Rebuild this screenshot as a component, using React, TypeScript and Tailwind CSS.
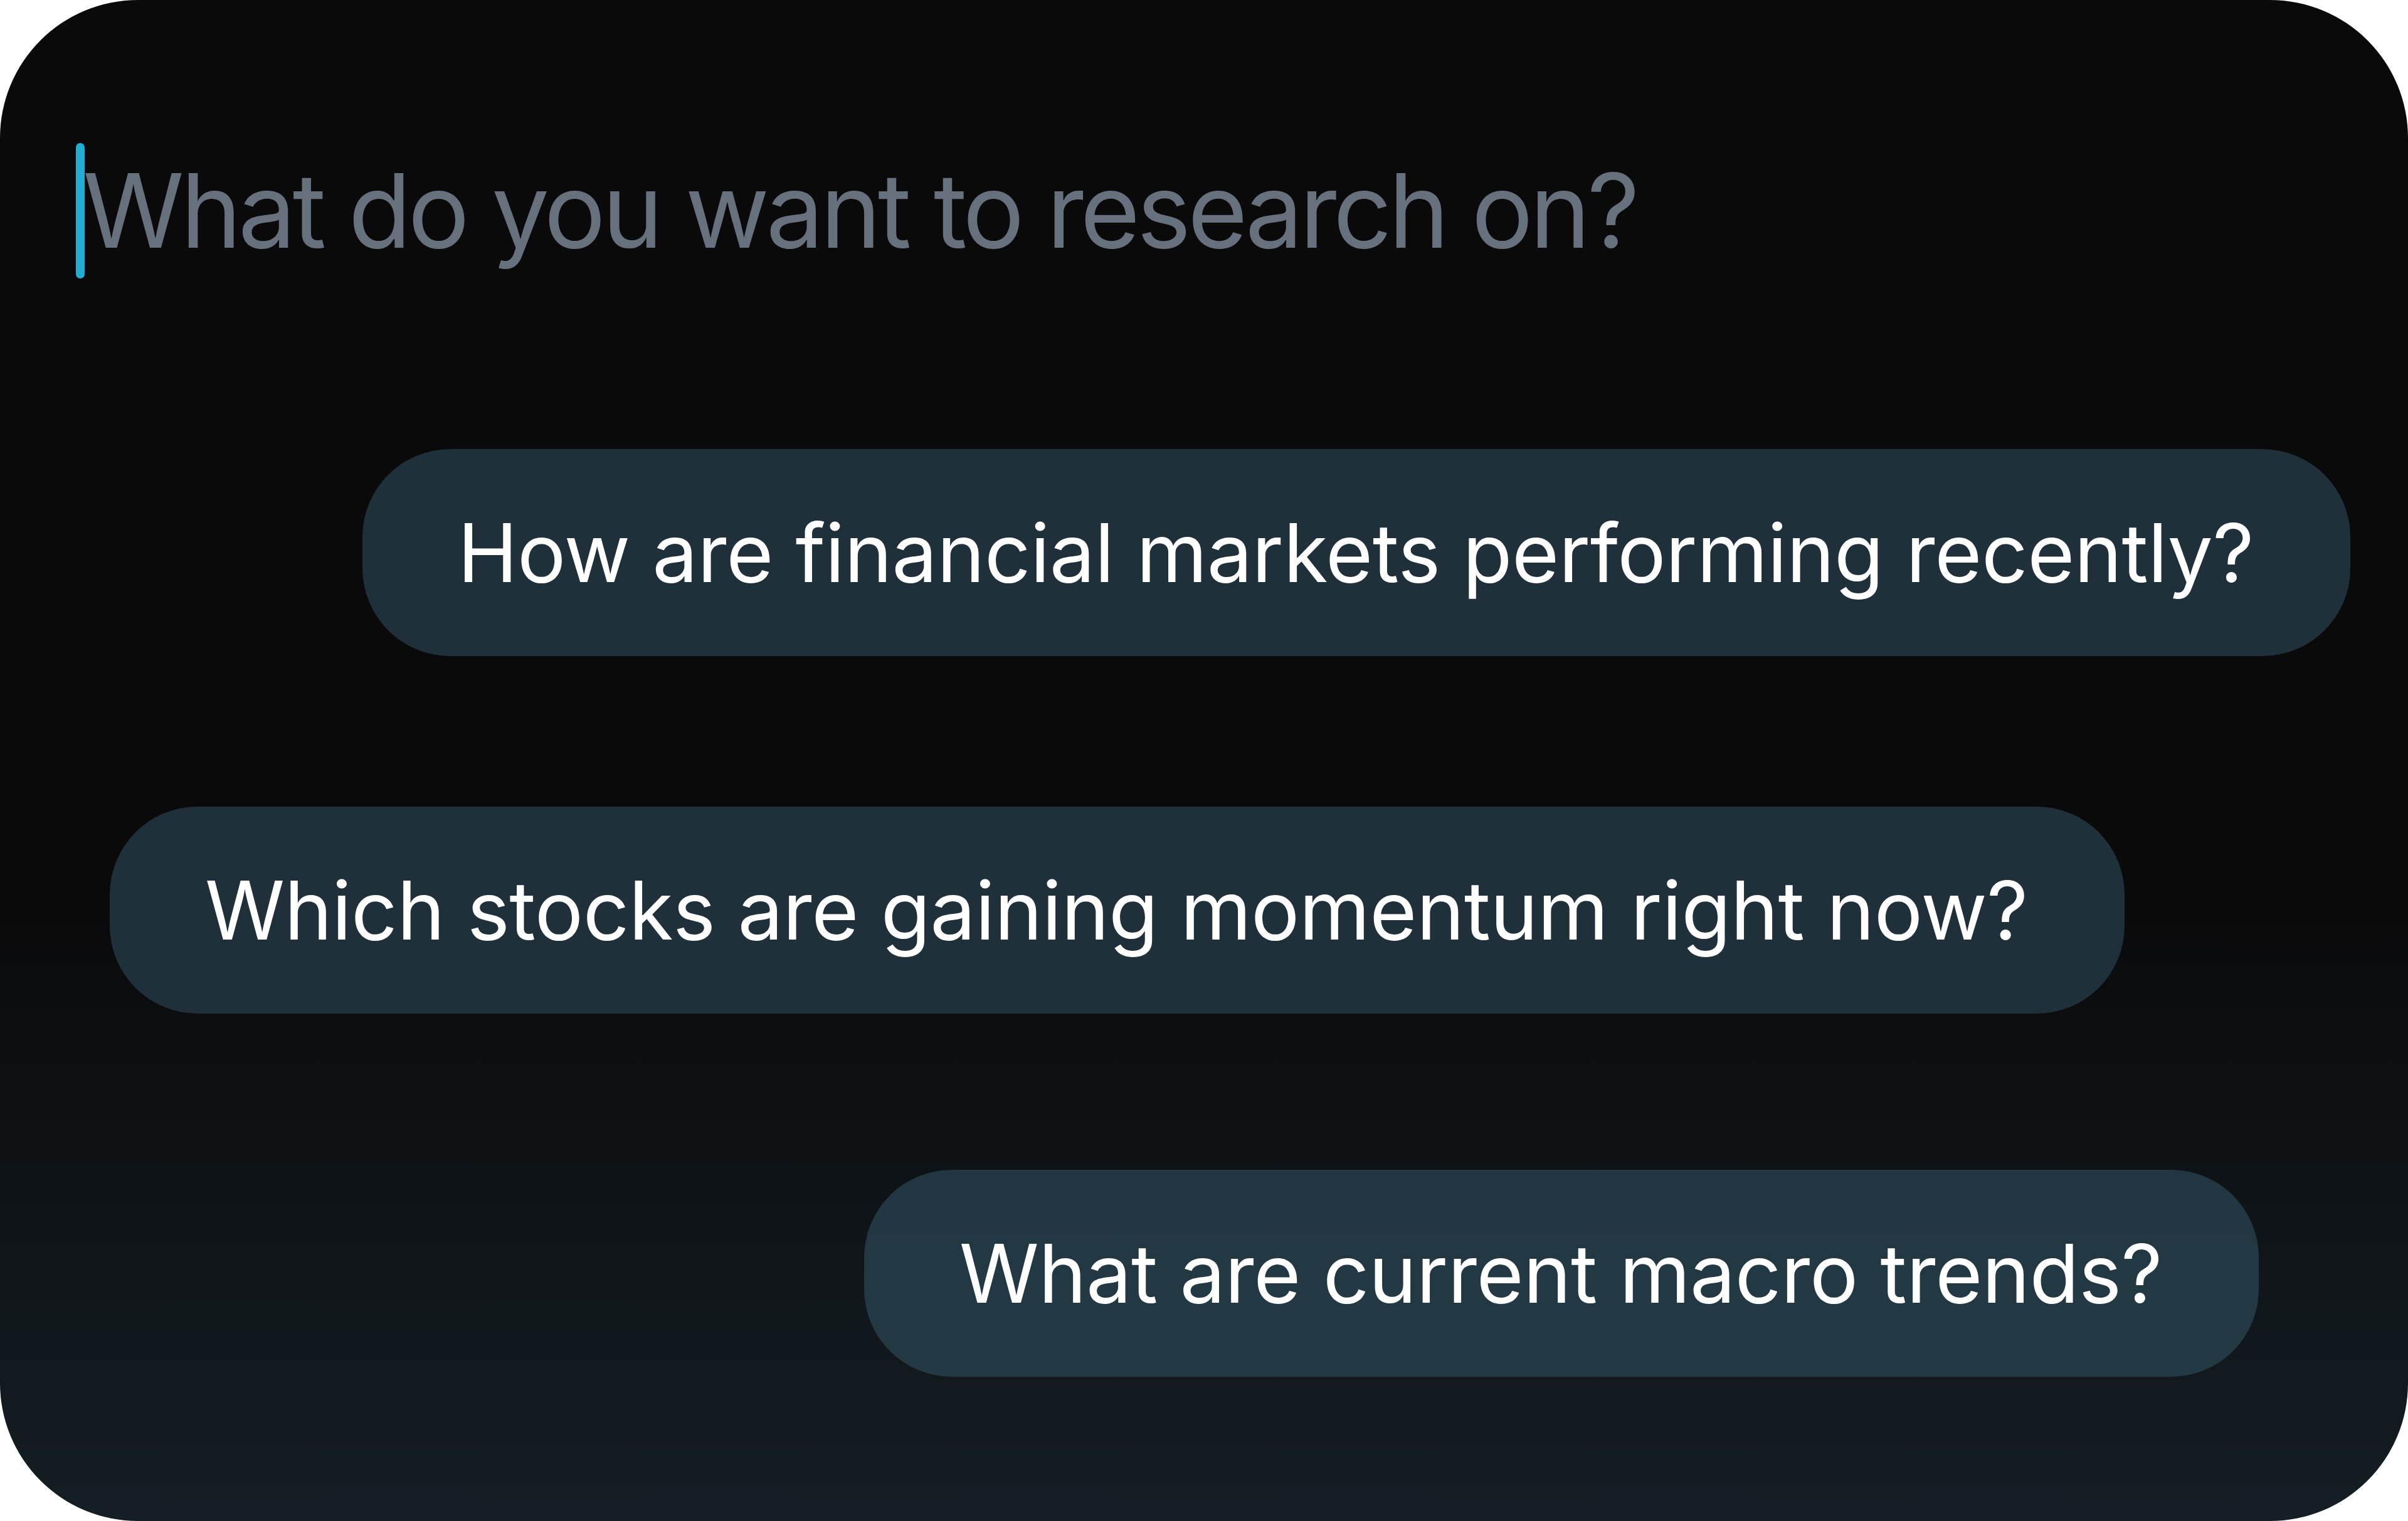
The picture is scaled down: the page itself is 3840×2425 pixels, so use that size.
const prompts = [
  { text: "How are financial markets performing recently?", place: "self-end mr-[92px]", tone: "bg-[#1f303a]" },
  { text: "Which stocks are gaining momentum right now?", place: "self-start ml-[175px] mt-[240px]", tone: "bg-[#1f303a]" },
  {
    text: "What are current macro trends?",
    place: "self-end mr-[238px] mt-[249px]",
    tone: "bg-[linear-gradient(180deg,#213641_0%,#233a45_100%)]",
  },
];

export default function App() {
  return (
    <div className="h-[2425px] w-[3840px] bg-white font-['Inter',_'Noto_Sans',_sans-serif]">
      <div className="flex h-full w-full flex-col rounded-[220px] bg-[linear-gradient(180deg,#0a0a0b_0%,#0a0a0b_60%,#141e24_100%)] pt-[228px]">
        <div className="flex items-center pl-[121px]">
          <span className="h-[216px] w-[14px] shrink-0 rounded-full bg-[#22aed4]" />
          <span className="-ml-[3px] text-[164px] leading-none tracking-[-0.033em] text-[#67707d]">
            What do you want to research on?
          </span>
        </div>

        <div className="mt-[272px] flex flex-col">
          {prompts.map((p) => (
            <PromptBubble key={p.text} text={p.text} className={`${p.place} ${p.tone}`} />
          ))}
        </div>
      </div>
    </div>
  );
}

function PromptBubble(props: { text: string; className: string }) {
  return (
    <button
      type="button"
      className={`flex h-[330px] items-center rounded-[140px] pl-[152px] pr-[154px] text-[129px] leading-none tracking-[-0.004em] text-white ${props.className}`}
    >
      {props.text}
    </button>
  );
}
